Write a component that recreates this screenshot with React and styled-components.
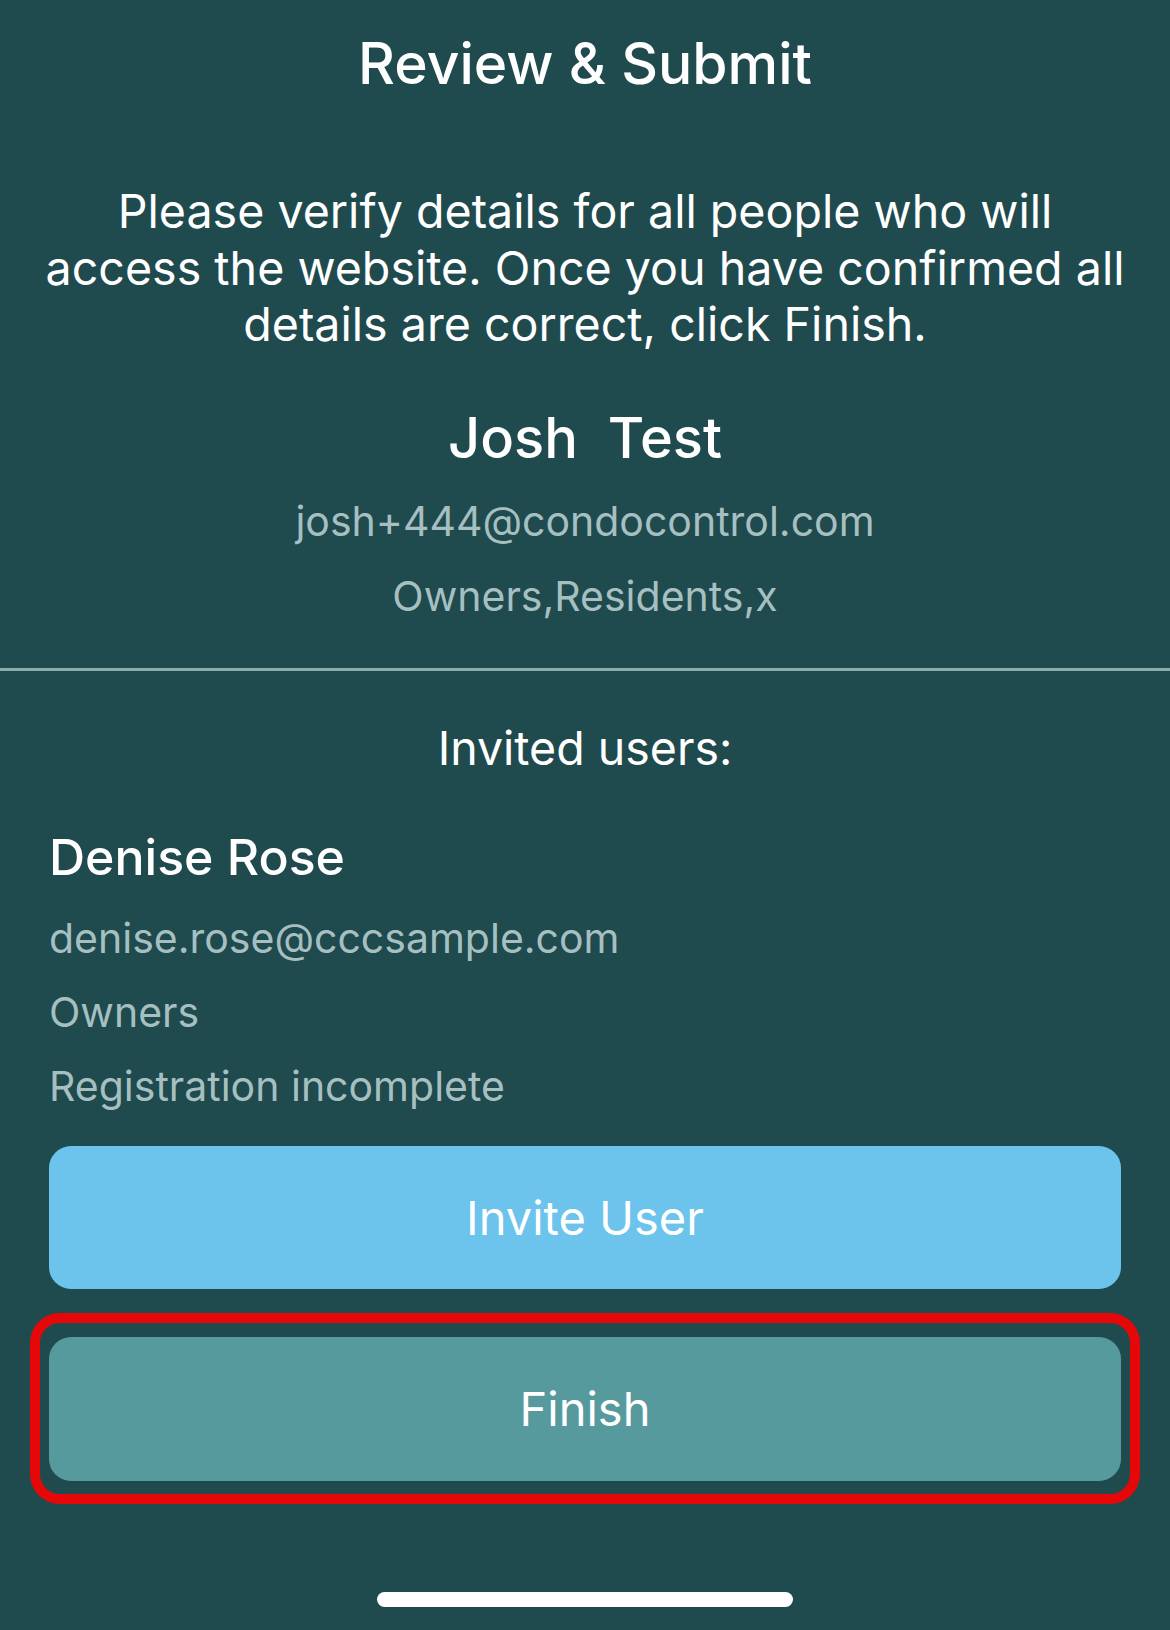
import React from 'react';
import styled, { createGlobalStyle } from 'styled-components';

const GlobalStyle = createGlobalStyle`
  html, body {
    margin: 0;
    padding: 0;
    background: #1f4a4e;
  }
  body {
    font-family: Inter, "Noto Sans", sans-serif;
    -webkit-font-smoothing: antialiased;
  }
`;

const Screen = styled.main`
  width: 1170px;
  min-height: 1630px;
  box-sizing: border-box;
  background: #1f4a4e;
  display: flex;
  flex-direction: column;
  padding-top: 32px;
`;

const Title = styled.h1`
  margin: 0;
  text-align: center;
  color: #fff;
  font-size: 57px;
  font-weight: 500;
  line-height: 64px;
`;

const Intro = styled.p`
  margin: 87px 40px 0;
  text-align: center;
  color: #fff;
  font-size: 46.6px;
  font-weight: 400;
  line-height: 56.5px;
`;

const Owner = styled.section`
  display: flex;
  flex-direction: column;
  align-items: center;
  padding-bottom: 42px;
  border-bottom: 3px solid #8aaeae;
`;

const OwnerName = styled.h2`
  margin: 50px 0 0;
  color: #fff;
  font-size: 56px;
  font-weight: 500;
  line-height: 70px;
  white-space: pre;
`;

const Detail = styled.div`
  margin-top: ${p => p.$gap || 15}px;
  color: #a6bfc0;
  font-size: 41px;
  line-height: 60px;
`;

const Invited = styled.section`
  display: flex;
  flex-direction: column;
  padding: 0 49px;
`;

const SectionLabel = styled.h3`
  margin: 47px 0 0;
  text-align: center;
  color: #fff;
  font-size: 46.5px;
  font-weight: 400;
  line-height: 60px;
`;

const UserName = styled.h4`
  margin: 46px 0 0;
  color: #fff;
  font-size: 50px;
  font-weight: 500;
  line-height: 66px;
`;

const Button = styled.button`
  display: flex;
  align-items: center;
  justify-content: center;
  width: 100%;
  height: ${p => p.$h || 143}px;
  border: none;
  border-radius: 22px;
  background: ${p => p.$bg};
  color: #fff;
  font-family: inherit;
  font-size: 47px;
  font-weight: 400;
  cursor: pointer;
`;

const Highlight = styled.div`
  margin: 24px -19px 0;
  padding: 14px 9px 13px;
  border: 10px solid #e60808;
  border-radius: 30px;
`;

const HomeBar = styled.div`
  align-self: center;
  width: 416px;
  height: 15px;
  margin-top: 88px;
  border-radius: 8px;
  background: #fff;
`;

export default function App() {
  return (
    <>
      <GlobalStyle />
      <Screen>
        <Title>Review &amp; Submit</Title>
        <Intro>
          Please verify details for all people who will access the website. Once you have confirmed all
          details are correct, click Finish.
        </Intro>
        <Owner>
          <OwnerName>{'Josh  Test'}</OwnerName>
          <Detail $gap={18}>josh+444@condocontrol.com</Detail>
          <Detail>Owners,Residents,x</Detail>
        </Owner>
        <Invited>
          <SectionLabel>Invited users:</SectionLabel>
          <UserName>Denise Rose</UserName>
          <Detail $gap={18}>denise.rose@cccsample.com</Detail>
          <Detail $gap={14}>Owners</Detail>
          <Detail $gap={14}>Registration incomplete</Detail>
          <Button $bg="#6cc3ec" style={{ marginTop: 30 }}>Invite User</Button>
          <Highlight>
            <Button $bg="#579a9d" $h={144}>Finish</Button>
          </Highlight>
          <HomeBar />
        </Invited>
      </Screen>
    </>
  );
}
